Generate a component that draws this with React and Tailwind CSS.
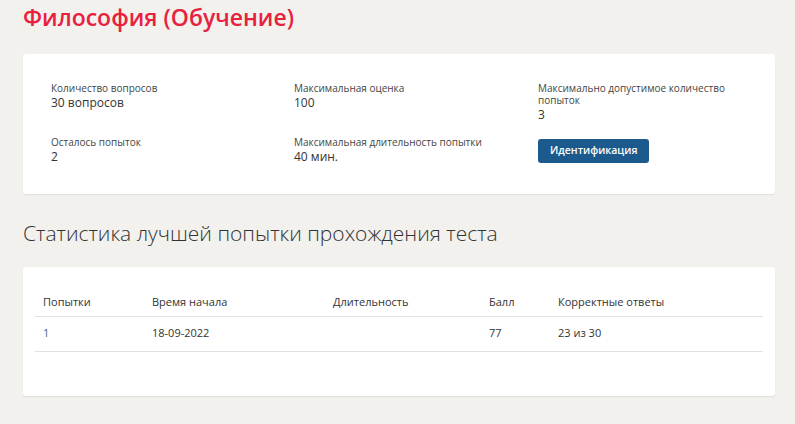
export default function App() {
  const font = { fontFamily: '"Open Sans", "Noto Sans", sans-serif' };
  return (
    <div className="min-h-screen bg-[#f2f1ee] pl-[23px] pr-[20px]" style={font}>
      {/* Page title */}
      <h1 className="pt-[2px] text-[23px] leading-[30px] font-semibold text-[#e8213f]">
        Философия (Обучение)
      </h1>

      {/* Test info card */}
      <div className="mt-[22px] bg-white rounded-[3px] shadow-[0_1px_1px_rgba(0,0,0,0.08)] pl-[28px] pr-[28px] pt-[28px] pb-[28px] h-[140px]">
        <div className="grid grid-cols-[243px_244px_190px] gap-y-[14px] text-[#333]">
          <div>
            <div className="text-[10px] leading-[13px] text-[#444]">Количество вопросов</div>
            <div className="text-[12px] leading-[15px]">30 вопросов</div>
          </div>
          <div>
            <div className="text-[10px] leading-[13px] text-[#444]">Максимальная оценка</div>
            <div className="text-[12px] leading-[15px]">100</div>
          </div>
          <div>
            <div className="text-[10px] leading-[12px] text-[#444]">Максимально допустимое количество попыток</div>
            <div className="mt-[1px] text-[12px] leading-[15px]">3</div>
          </div>
          <div>
            <div className="text-[10px] leading-[13px] text-[#444]">Осталось попыток</div>
            <div className="text-[12px] leading-[15px]">2</div>
          </div>
          <div>
            <div className="text-[10px] leading-[13px] text-[#444]">Максимальная длительность попытки</div>
            <div className="text-[12px] leading-[15px] font-medium">40 мин.</div>
          </div>
          <div>
            <button className="h-[24px] px-[12px] rounded-[3px] bg-[#1c5a8e] text-white text-[10.5px] font-semibold">
              Идентификация
            </button>
          </div>
        </div>
      </div>

      {/* Best attempt statistics */}
      <h2 className="mt-[26px] text-[21px] leading-[26px] font-light text-[#333]">
        Статистика лучшей попытки прохождения теста
      </h2>

      <div className="mt-[21px] bg-white rounded-[3px] shadow-[0_1px_1px_rgba(0,0,0,0.08)] px-[12px] pt-[20px] pb-[44px]">
        <table className="w-full table-fixed text-[11px] text-[#333]">
          <colgroup>
            <col className="w-[109px]" />
            <col className="w-[181px]" />
            <col className="w-[156px]" />
            <col className="w-[69px]" />
            <col />
          </colgroup>
          <thead>
            <tr className="h-[29px] border-b border-[#e2e2e2]">
              <th className="text-left font-medium pl-[8px] pt-[2px]">Попытки</th>
              <th className="text-left font-medium pl-[8px] pt-[2px]">Время начала</th>
              <th className="text-left font-medium pl-[8px] pt-[2px]">Длительность</th>
              <th className="text-left font-medium pl-[8px] pt-[2px]">Балл</th>
              <th className="text-left font-medium pl-[8px] pt-[2px]">Корректные ответы</th>
            </tr>
          </thead>
          <tbody>
            <tr className="h-[35px] border-b border-[#e2e2e2]">
              <td className="pl-[8px] text-[#4d6680]">1</td>
              <td className="pl-[8px]">18-09-2022</td>
              <td className="pl-[8px]"></td>
              <td className="pl-[8px]">77</td>
              <td className="pl-[8px]">23 из 30</td>
            </tr>
          </tbody>
        </table>
      </div>
    </div>
  );
}
